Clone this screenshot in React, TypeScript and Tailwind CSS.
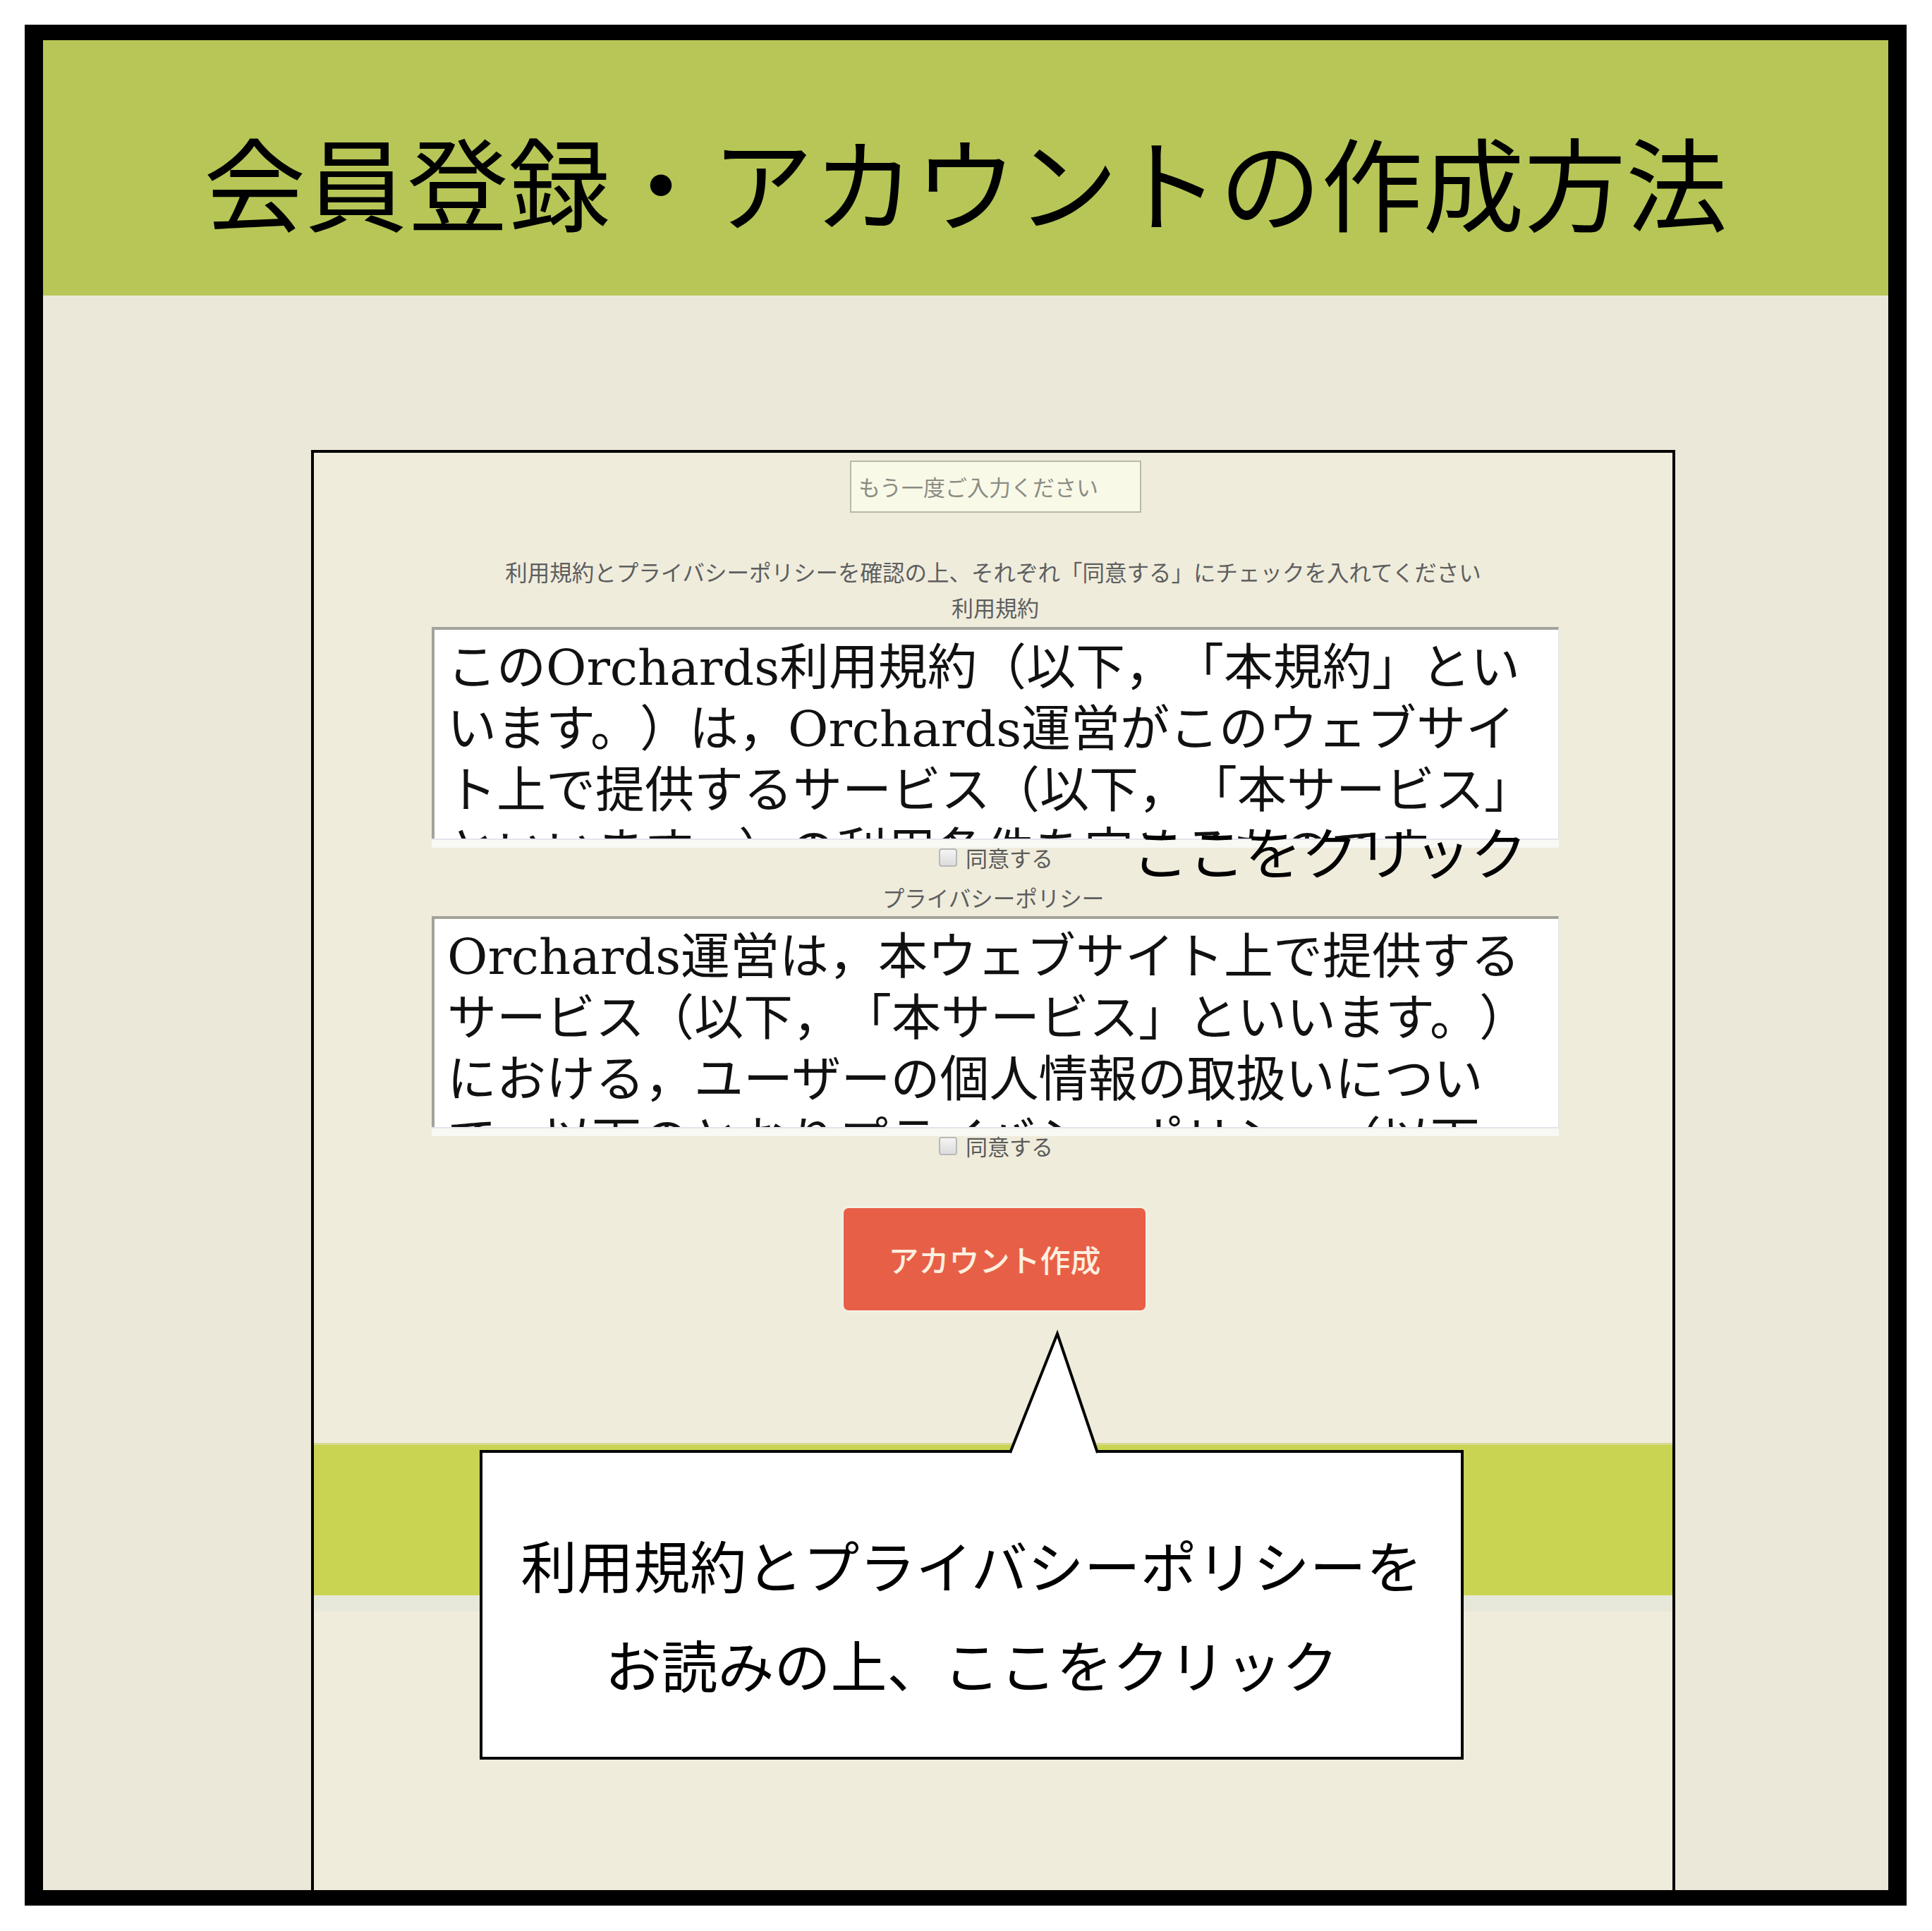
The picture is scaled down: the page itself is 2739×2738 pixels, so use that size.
import React from "react";

const sans = "font-['Noto_Sans_CJK_JP',sans-serif]";

const termsLines = [
  "このOrchards利用規約（以下，「本規約」とい",
  "います。）は，Orchards運営がこのウェブサイ",
  "ト上で提供するサービス（以下，「本サービス」",
  "といいます。）の利用条件を定めるものです。",
];

const privacyLines = [
  "Orchards運営は，本ウェブサイト上で提供する",
  "サービス（以下，「本サービス」といいます。）",
  "における，ユーザーの個人情報の取扱いについ",
  "て，以下のとおりプライバシーポリシー（以下，",
];

const TextBox: React.FC<{ lines: string[]; height: string }> = ({ lines, height }) => (
  <div className={`ml-[6px] w-[1598px] flex flex-col ${height}`}>
    <div className="flex-1 overflow-hidden border-t-4 border-l-4 border-[#a3a39b] border-r border-r-[#e2e2e2] bg-white pl-[18px] pt-[11px] font-['DejaVu_Serif','Noto_Sans_CJK_JP',serif] text-[70px] text-[#111] [text-spacing-trim:space-all]">
      {lines.map((l) => (
        <div key={l} className="h-[87px] leading-[87px] whitespace-nowrap">
          {l}
        </div>
      ))}
    </div>
    <div className="h-[13px] border-t-2 border-[#e4e4ec] bg-[#f8f8f4]" />
  </div>
);

const Agree: React.FC = () => (
  <div className="ml-[8px] h-[28px] flex items-center gap-[12px]">
    <span className="w-[26px] h-[26px] rounded-[4px] border-2 border-[#b9b9b9] bg-gradient-to-b from-[#f4f4f4] to-[#dcdcdc]" />
    <span className="text-[31px] leading-[28px] text-[#5a5a5a]">同意する</span>
  </div>
);

export default function App() {
  return (
    <div className={`w-[2739px] h-[2738px] bg-white pt-[35px] pl-[35px] ${sans}`}>
      <div className="w-[2668px] h-[2667px] border-x-[26px] border-y-[22px] border-black bg-[#ebe8da] flex flex-col">
        <header className="h-[362px] shrink-0 bg-[#b7c656] flex justify-center pt-[126px]">
          <h1 className="text-[144px] leading-[144px] font-normal text-black whitespace-nowrap">
            会員登録・アカウントの作成方法
          </h1>
        </header>

        <div className="flex-1 pt-[219px] pl-[380px] flex flex-col">
          <div className="relative w-[1934px] flex-1 border-x-4 border-t-4 border-black bg-[#efecdc] flex flex-col items-center">
            <div className="mt-[11px] ml-[7px] w-[413px] h-[74px] border-2 border-[#b9b9a9] bg-[#f9f9e8] pl-[10px] flex items-center text-[31px] text-[#8c8c84]">
              もう一度ご入力ください
            </div>

            <p className="mt-[63px] h-[40px] leading-[40px] text-[31.5px] text-[#5e5e5e] whitespace-nowrap">
              利用規約とプライバシーポリシーを確認の上、それぞれ「同意する」にチェックを入れてください
            </p>
            <p className="mt-[11px] ml-[6px] h-[40px] leading-[40px] text-[31px] text-[#5e5e5e]">利用規約</p>
            <div className="mt-[8px]">
              <TextBox lines={termsLines} height="h-[313px]" />
            </div>
            <Agree />

            <p className="mt-[22px] h-[40px] leading-[40px] text-[31.5px] text-[#5e5e5e]">プライバシーポリシー</p>
            <div className="mt-[7px]">
              <TextBox lines={privacyLines} height="h-[312px]" />
            </div>
            <Agree />

            <button className="mt-[74px] ml-[4px] w-[428px] h-[145px] rounded-[7px] bg-[#e85f48] text-[43px] font-medium text-[#fcefdf] shadow-[0_0_6px_rgba(255,255,255,0.8)]">
              アカウント作成
            </button>

            <div className="mt-[188px] self-stretch h-[216px] border-t-[3px] border-[#d6da8c] bg-[#c9d452]" />
            <div className="self-stretch h-[23px] bg-[#e8e8da]" />

            <span className="absolute left-[1160px] top-[523px] text-[80px] leading-[80px] font-normal text-black whitespace-nowrap">
              ここをクリック
            </span>

            <div className="absolute left-[235px] top-[1414px] w-[1395px] h-[439px] border-4 border-black bg-white flex flex-col items-center pt-[87px] text-[80px] leading-[141px] font-normal text-black">
              <span className="whitespace-nowrap">利用規約とプライバシーポリシーを</span>
              <span className="whitespace-nowrap">お読みの上、ここをクリック</span>
            </div>

            <svg className="absolute left-[980px] top-[1243px]" width="140" height="182" viewBox="0 0 140 182">
              <polygon points="74,6 7,176 131,176" fill="#ffffff" />
              <rect x="9" y="168" width="120" height="9" fill="#ffffff" />
              <polyline points="7,175 74,6 131,175" fill="none" stroke="#000" strokeWidth="4" strokeLinejoin="miter" />
            </svg>
          </div>
        </div>
      </div>
    </div>
  );
}
